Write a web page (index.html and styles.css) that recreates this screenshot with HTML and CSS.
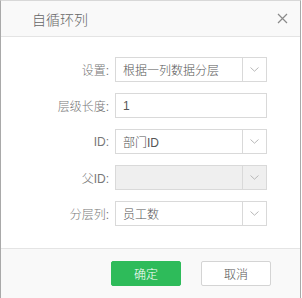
FILE: index.html
```html
<!DOCTYPE html>
<html lang="zh">
<head>
    <meta charset="UTF-8">
    <title>自循环列</title>
    <link rel="stylesheet" href="styles.css">
</head>
<body>
    <div class="dialog">
        <div class="dialog-header">
            <span class="dialog-title">自循环列</span>
            <span class="close">
                <svg width="11" height="11" viewBox="0 0 11 11"><path d="M1 1L10 10M10 1L1 10" stroke="#8a8a8a" stroke-width="1.2" fill="none"/></svg>
            </span>
        </div>

        <div class="dialog-body">
            <div class="row">
                <label>设置:</label>
                <div class="select">
                    <span class="value">根据一列数据分层</span>
                    <span class="arrow"><svg width="9" height="5" viewBox="0 0 9 5"><path d="M0.5 0.5L4.5 4.2L8.5 0.5" stroke="#b8b8b8" fill="none"/></svg></span>
                </div>
            </div>
            <div class="row">
                <label>层级长度:</label>
                <div class="input"><span class="value">1</span></div>
            </div>
            <div class="row">
                <label>ID:</label>
                <div class="select">
                    <span class="value">部门ID</span>
                    <span class="arrow"><svg width="9" height="5" viewBox="0 0 9 5"><path d="M0.5 0.5L4.5 4.2L8.5 0.5" stroke="#b8b8b8" fill="none"/></svg></span>
                </div>
            </div>
            <div class="row">
                <label>父ID:</label>
                <div class="select disabled">
                    <span class="value"></span>
                    <span class="arrow"><svg width="9" height="5" viewBox="0 0 9 5"><path d="M0.5 0.5L4.5 4.2L8.5 0.5" stroke="#b8b8b8" fill="none"/></svg></span>
                </div>
            </div>
            <div class="row">
                <label>分层列:</label>
                <div class="select">
                    <span class="value">员工数</span>
                    <span class="arrow"><svg width="9" height="5" viewBox="0 0 9 5"><path d="M0.5 0.5L4.5 4.2L8.5 0.5" stroke="#b8b8b8" fill="none"/></svg></span>
                </div>
            </div>
        </div>

        <div class="dialog-footer">
            <button class="btn btn-primary">确定</button>
            <button class="btn">取消</button>
        </div>
    </div>
</body>
</html>
```

FILE: styles.css
```css
body {
    margin: 0;
    font-family: "Liberation Sans", "Noto Sans CJK SC", sans-serif;
    font-weight: 300;
    background-color: #ffffff;
    color: #333333;
}

.dialog {
    width: 299px;
    height: 297px;
    border: 1px solid #a9a9a9;
    border-top-color: #d8d8d8;
    background-color: #ffffff;
    display: flex;
    flex-direction: column;
}

.dialog-header {
    height: 36px;
    box-sizing: border-box;
    border-bottom: 1px solid #e4e4e4;
    background-color: #f9f9f9;
    display: flex;
    align-items: center;
    justify-content: space-between;
    padding: 0 12px 0 31px;
}

.dialog-title {
    font-size: 14px;
    color: #666666;
}

.close {
    display: flex;
}

.dialog-body {
    flex: 1;
    padding-top: 20px;
    display: flex;
    flex-direction: column;
    gap: 11px;
}

.row {
    display: flex;
    align-items: center;
    height: 25px;
}

.row label {
    width: 108px;
    box-sizing: border-box;
    text-align: right;
    font-size: 12px;
    color: #777777;
    margin-right: 6px;
}

.select,
.input {
    width: 152px;
    height: 25px;
    box-sizing: border-box;
    border: 1px solid #d9d9d9;
    background-color: #ffffff;
    display: flex;
    align-items: center;
}

.value {
    flex: 1;
    padding-left: 7px;
    font-size: 12px;
    color: #555555;
}

.arrow {
    width: 23px;
    height: 100%;
    border-left: 1px solid #d9d9d9;
    display: flex;
    align-items: center;
    justify-content: center;
}

.select.disabled {
    background-color: #efefef;
}

.dialog-footer {
    height: 50px;
    box-sizing: border-box;
    border-top: 1px solid #e4e4e4;
    background-color: #f9f9f9;
    display: flex;
    align-items: center;
    justify-content: flex-end;
    padding: 0 29px 0 0;
    gap: 20px;
}

.btn {
    width: 70px;
    height: 25px;
    border: 1px solid #d4d4d4;
    border-radius: 2px;
    background-color: #ffffff;
    font-family: inherit;
    font-weight: 300;
    font-size: 12px;
    color: #555555;
    padding: 0;
}

.btn-primary {
    background-color: #2ebb5a;
    border-color: #2ebb5a;
    color: #ffffff;
}
```
